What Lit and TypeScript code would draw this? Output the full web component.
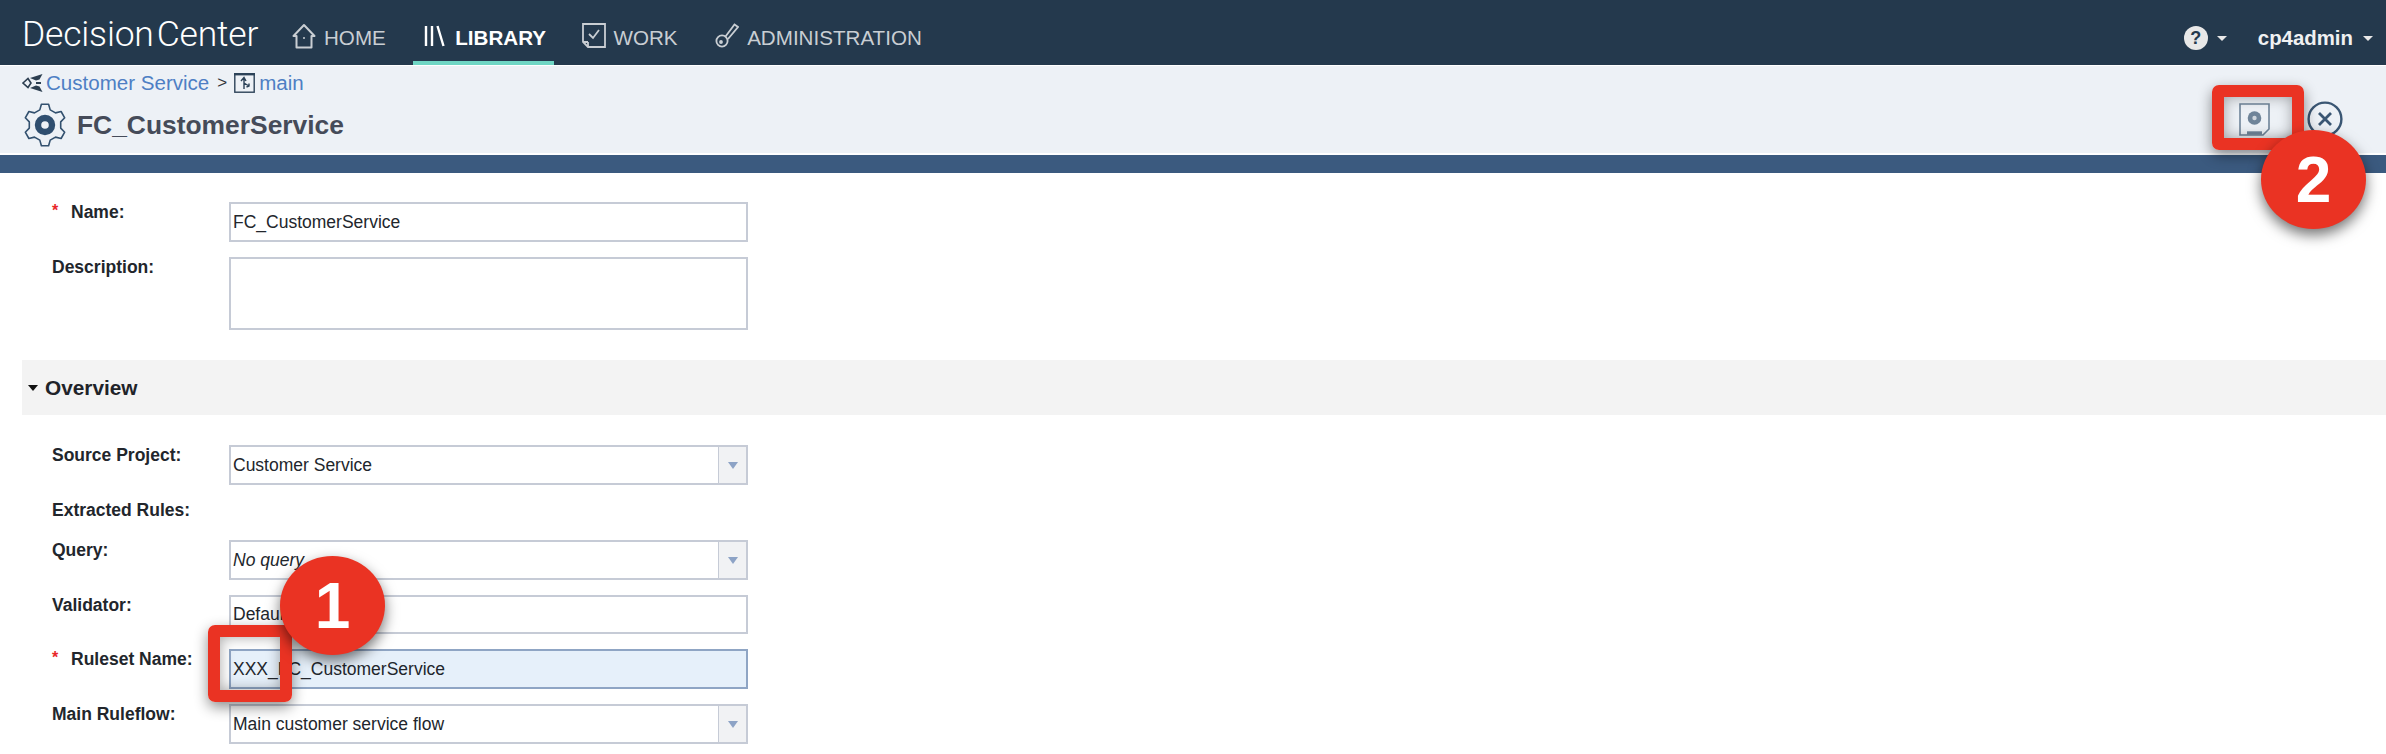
import { LitElement, html, css, svg } from 'lit';
import { customElement } from 'lit/decorators.js';

// six toothed outline for the page gear
function gearPath(cx: number, cy: number, outer: number, inner: number) {
  const pts: string[] = [];
  for (let i = 0; i < 6; i++) {
    const a = -90 + i * 60;
    const at = (deg: number, r: number) => {
      const t = (deg * Math.PI) / 180;
      return `${(cx + r * Math.cos(t)).toFixed(1)} ${(cy + r * Math.sin(t)).toFixed(1)}`;
    };
    pts.push(at(a - 19, inner), at(a - 10, outer), at(a + 10, outer), at(a + 19, inner));
  }
  return 'M' + pts.join('L') + 'Z';
}

@customElement('app-root')
export class AppRoot extends LitElement {
  static styles = css`
    :host {
      display: block;
      position: relative;
      height: 754px;
      overflow: hidden;
      background: #fff;
      font-family: 'Liberation Sans', Arial, sans-serif;
      color: #1f2329;
    }

    .nav {
      display: flex;
      align-items: stretch;
      height: 65px;
      padding: 0 13px 0 22px;
      background: #24394d;
      color: #c9ced3;
      font-size: 20.6px;
    }
    .logo {
      display: flex;
      gap: 3px;
      align-items: center;
      width: 260px;
      padding-top: 2px;
      color: #fff;
      font-family: Roboto, 'Liberation Sans', sans-serif;
      font-weight: 300;
      font-size: 35.5px;
      letter-spacing: -0.2px;
    }
    .nav-item {
      display: flex;
      align-items: center;
      gap: 8px;
      padding: 15px 10px 0;
      margin-right: 17.5px;
      border-bottom: 4px solid transparent;
      box-sizing: border-box;
    }
    .nav-item svg {
      margin-top: -5px;
    }
    .nav-item.active {
      gap: 10px;
      padding: 15px 8px 0 11px;
      color: #fff;
      font-weight: bold;
      border-bottom-color: #6fd6c4;
    }
    .nav-right {
      display: flex;
      align-items: center;
      margin-left: auto;
      padding-top: 11px;
      color: #f0f1f2;
      font-weight: bold;
      font-size: 20.4px;
    }
    .help {
      display: flex;
      align-items: center;
      justify-content: center;
      width: 24px;
      height: 24px;
      border-radius: 50%;
      background: #e8e8e8;
      color: #24394d;
      font-size: 18px;
    }
    .caret {
      width: 0;
      height: 0;
      border-left: 5px solid transparent;
      border-right: 5px solid transparent;
      border-top: 5px solid #e8e8e8;
    }
    .help + .caret {
      margin: 0 31px 0 9px;
    }
    .user + .caret {
      margin-left: 10px;
    }

    .subhead {
      display: flex;
      justify-content: space-between;
      height: 87px;
      margin-top: 1px;
      background: #edf1f6;
      box-sizing: border-box;
      padding: 7px 43px 0 22px;
    }
    .crumbs {
      display: flex;
      align-items: center;
      height: 20px;
      font-size: 20.55px;
      color: #4e7fc4;
    }
    .crumbs .sep {
      margin: 0 7px 0 8px;
      font-size: 17px;
      color: #33373d;
    }
    .title {
      display: flex;
      align-items: center;
      gap: 10px;
      margin-top: 10px;
      padding-left: 1px;
      font-size: 26.4px;
      font-weight: bold;
      color: #454b59;
    }
    .actions {
      display: flex;
      align-items: center;
      gap: 37px;
      height: 66px;
      padding-top: 26px;
      box-sizing: border-box;
    }
    .bluebar {
      height: 18px;
      margin-top: 2px;
      background: #3b5a7f;
    }

    .form {
      display: flex;
      flex-direction: column;
      gap: 15px;
      padding-top: 29px;
    }
    .row {
      display: flex;
      padding-left: 52px;
      font-size: 17.5px;
    }
    .label {
      position: relative;
      width: 177px;
      line-height: 20px;
      font-weight: bold;
      color: #22262c;
    }
    .label.req {
      padding-left: 19px;
      width: 158px;
    }
    .req::before {
      content: '*';
      position: absolute;
      left: 0;
      top: -1px;
      color: #e8272a;
      font-size: 16px;
    }
    .field {
      display: flex;
      align-items: center;
      box-sizing: border-box;
      width: 519px;
      height: 40px;
      padding-left: 2px;
      border: 2px solid #c6cbd6;
      background: #fff;
      color: #22262c;
    }
    .field.tall {
      height: 73px;
    }
    .field.trim {
      height: 39px;
    }
    .field.focus {
      background: #e6f0fa;
      border-color: #8fa5c4;
    }
    .field em {
      font-style: italic;
    }
    .select {
      justify-content: space-between;
      padding-right: 0;
    }
    .drop {
      display: flex;
      align-items: center;
      justify-content: center;
      width: 27px;
      height: 100%;
      background: #f1f2f4;
      border-left: 1px solid #c6cbd6;
    }
    .drop::after {
      content: '';
      border-left: 5.5px solid transparent;
      border-right: 5.5px solid transparent;
      border-top: 7px solid #8da3c6;
    }
    .band {
      display: flex;
      align-items: center;
      gap: 7px;
      height: 55px;
      margin: 15px 0 15px 22px;
      padding-left: 6px;
      background: #f3f3f3;
      font-size: 20.8px;
      font-weight: bold;
      color: #1f2329;
    }
    .band i {
      width: 0;
      height: 0;
      border-left: 5px solid transparent;
      border-right: 5px solid transparent;
      border-top: 6px solid #111;
    }
    .short {
      height: 25px;
    }

    /* callouts drawn over the screenshot */
    .box {
      position: absolute;
      box-sizing: border-box;
      border: 12px solid #ea3323;
      border-radius: 7px;
      box-shadow: 0 5px 14px rgba(0, 0, 0, 0.45), inset 0 0 14px rgba(0, 0, 0, 0.35);
    }
    .box.one {
      left: 208px;
      top: 625px;
      width: 84px;
      height: 77px;
    }
    .box.two {
      left: 2212px;
      top: 85px;
      width: 92px;
      height: 65px;
    }
    .badge {
      position: absolute;
      display: flex;
      align-items: center;
      justify-content: center;
      width: 105px;
      height: 99px;
      border-radius: 50%;
      background: #ea3323;
      color: #fff;
      font-size: 64px;
      font-weight: bold;
      box-shadow: 0 6px 14px rgba(0, 0, 0, 0.55);
    }
    .badge.one {
      left: 280px;
      top: 556px;
    }
    .badge.two {
      left: 2261px;
      top: 130px;
    }
  `;

  navItem(label: string, icon: unknown, active = false) {
    return html`<div class="nav-item ${active ? 'active' : ''}">${icon}<span>${label}</span></div>`;
  }

  row(label: string, content: unknown, req = false) {
    return html`<div class="row">
      <div class="label ${req ? 'req' : ''}">${label}</div>
      ${content}
    </div>`;
  }

  select(content: unknown) {
    return html`<div class="field select"><span>${content}</span><span class="drop"></span></div>`;
  }

  render() {
    const homeIcon = html`<svg width="24" height="26" viewBox="0 0 24 26" fill="none" stroke="currentColor" stroke-width="2">
      <path d="M12 2 22.5 13H19.5V24.5H4.5V13H1.5Z" stroke-linejoin="round" />
      <circle cx="12" cy="15" r="1" fill="currentColor" stroke="none" />
    </svg>`;
    const libraryIcon = html`<svg width="21" height="22" viewBox="0 0 21 22" fill="none" stroke="#fff" stroke-width="2.4">
      <path d="M2 1V21M8 1V21M13.5 1 19.5 21" />
    </svg>`;
    const workIcon = html`<svg width="24" height="25" viewBox="0 0 24 25" fill="none" stroke="currentColor" stroke-width="1.8">
      <path d="M1 1H23V24H6L1 19Z" />
      <path d="M6 19V24M1 19H6" />
      <path d="M7 11 11 15 17 7" />
    </svg>`;
    const keyIcon = html`<svg width="24" height="25" viewBox="0 0 24 25" fill="none" stroke="currentColor" stroke-width="1.8">
      <circle cx="7" cy="18" r="5.6" />
      <circle cx="6" cy="19" r="1" />
      <path d="M10.5 13.5 19.5 1.5 23 4 13 16" />
    </svg>`;
    const projectIcon = html`<svg width="21" height="18" viewBox="0 0 21 18" style="margin-right:3px">
      <path d="M1 9 6 4.5 9 9 6 13.5Z" fill="none" stroke="#2c3e50" stroke-width="1.6" />
      <path d="M8 4 20.5 0 17.5 5.5 14 6.5ZM8 14 20.5 18 17.5 12.5 14 11.5ZM14 8H19V10H14Z" fill="#2c3e50" />
    </svg>`;
    const branchIcon = html`<svg width="21" height="20" viewBox="0 0 21 20" fill="none" stroke="#2c4258" stroke-width="1.4" style="margin-right:4px">
      <rect x="0.8" y="1" width="19.4" height="18.2" />
      <path d="M0 1.2H21" stroke-width="2.4" />
      <path d="M7 8 10 4.5 12 8M10 5V16M10 10 15 13M12.5 14 15 13 15 10.5" />
    </svg>`;
    const gearIcon = svg`<path d=${gearPath(22, 22, 21, 16)} fill="none" stroke="#33516f" stroke-width="1.6" stroke-linejoin="round" />
      <circle cx="22" cy="22" r="7" fill="none" stroke="#2f4e6f" stroke-width="6.4" />`;
    const saveIcon = html`<svg width="31" height="33" viewBox="0 0 31 33" fill="none" stroke="#6f8499" stroke-width="1.6">
      <path d="M1 1H30V26L24 32H1Z" />
      <circle cx="15.5" cy="15" r="6.8" fill="#6f8499" stroke="none" />
      <circle cx="15.5" cy="15" r="2.2" fill="#cfd6dd" stroke="none" />
      <path d="M8 30H23" stroke-width="3.4" />
    </svg>`;
    const closeIcon = html`<svg width="36" height="36" viewBox="0 0 36 36" fill="none" stroke="#3a5673" stroke-width="2.4">
      <circle cx="18" cy="18" r="16.4" />
      <path d="M12 12 24 24M24 12 12 24" stroke-width="2.8" />
    </svg>`;

    return html`
      <div class="nav">
        <div class="logo"><span>Decision</span><span>Center</span></div>
        ${this.navItem('HOME', homeIcon)}
        ${this.navItem('LIBRARY', libraryIcon, true)}
        ${this.navItem('WORK', workIcon)}
        ${this.navItem('ADMINISTRATION', keyIcon)}
        <div class="nav-right">
          <span class="help">?</span><span class="caret"></span>
          <span class="user">cp4admin</span><span class="caret"></span>
        </div>
      </div>

      <div class="subhead">
        <div>
          <div class="crumbs">
            ${projectIcon}<span>Customer Service</span><span class="sep">&gt;</span>${branchIcon}<span>main</span>
          </div>
          <div class="title">
            <svg width="44" height="44" viewBox="0 0 44 44">${gearIcon}</svg>
            <span>FC_CustomerService</span>
          </div>
        </div>
        <div class="actions">${saveIcon}${closeIcon}</div>
      </div>
      <div class="bluebar"></div>

      <div class="form">
        ${this.row('Name:', html`<div class="field">FC_CustomerService</div>`, true)}
        ${this.row('Description:', html`<div class="field tall"></div>`)}
        <div class="band"><i></i><span>Overview</span></div>
        ${this.row('Source Project:', this.select('Customer Service'))}
        <div class="row short"><div class="label">Extracted Rules:</div></div>
        ${this.row('Query:', this.select(html`<em>No query</em>`))}
        ${this.row('Validator:', html`<div class="field trim">Default</div>`)}
        ${this.row('Ruleset Name:', html`<div class="field focus">XXX_FC_CustomerService</div>`, true)}
        ${this.row('Main Ruleflow:', this.select('Main customer service flow'))}
      </div>

      <div class="box one"></div>
      <div class="badge one">1</div>
      <div class="box two"></div>
      <div class="badge two">2</div>
    `;
  }
}
